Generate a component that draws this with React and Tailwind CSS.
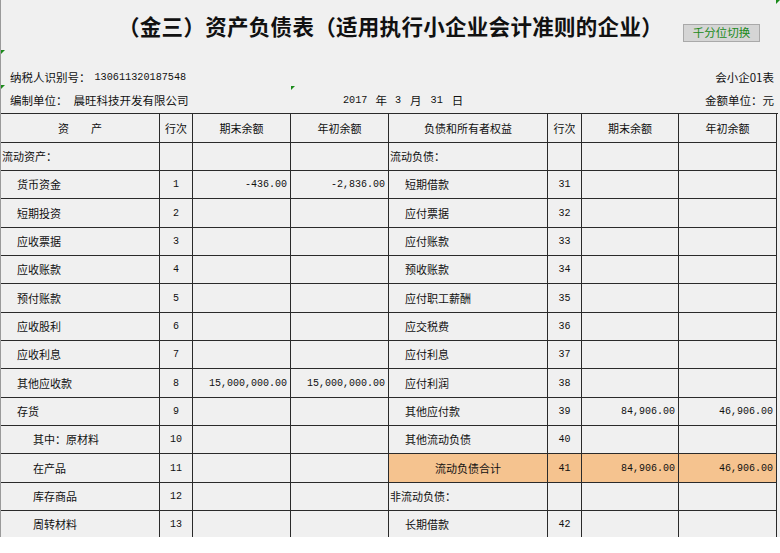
import React from "react";

const cjk = "font-['Noto_Sans_CJK_SC','Noto_Sans',sans-serif]";
const mono = "font-['Liberation_Mono',monospace]";

const heights = ["h-[28px]", "h-[28px]", "h-[29px]"];

const rows = [
    { l: { name: "流动资产：", indent: 0 }, r: { name: "流动负债：", indent: 0 } },
    { l: { name: "货币资金", no: "1", end: "-436.00", begin: "-2,836.00" }, r: { name: "短期借款", no: "31" } },
    { l: { name: "短期投资", no: "2" }, r: { name: "应付票据", no: "32" } },
    { l: { name: "应收票据", no: "3" }, r: { name: "应付账款", no: "33" } },
    { l: { name: "应收账款", no: "4" }, r: { name: "预收账款", no: "34" } },
    { l: { name: "预付账款", no: "5" }, r: { name: "应付职工薪酬", no: "35" } },
    { l: { name: "应收股利", no: "6" }, r: { name: "应交税费", no: "36" } },
    { l: { name: "应收利息", no: "7" }, r: { name: "应付利息", no: "37" } },
    { l: { name: "其他应收款", no: "8", end: "15,000,000.00", begin: "15,000,000.00" }, r: { name: "应付利润", no: "38" } },
    { l: { name: "存货", no: "9" }, r: { name: "其他应付款", no: "39", end: "84,906.00", begin: "46,906.00" } },
    { l: { name: "其中：原材料", no: "10", indent: 2 }, r: { name: "其他流动负债", no: "40" } },
    { l: { name: "在产品", no: "11", indent: 2 }, r: { name: "流动负债合计", no: "41", end: "84,906.00", begin: "46,906.00", total: true } },
    { l: { name: "库存商品", no: "12", indent: 2 }, r: { name: "非流动负债：", indent: 0 } },
    { l: { name: "周转材料", no: "13", indent: 2 }, r: { name: "长期借款", no: "42" } },
];

const cellBase = "border-r border-b border-[#2a2a2a] flex items-center overflow-hidden";

const Side = ({ item, h }) => {
    const bg = item.total ? "bg-[#f5c38f]" : "";
    const pad = item.indent === 0 ? "pl-[1px]" : item.indent === 2 ? "pl-[32px]" : "pl-[16px]";
    return (
        <>
            <div className={`${cellBase} ${h} ${bg} ${item.total ? "justify-center" : pad} ${cjk} text-[11px]`}>
                {item.name}
            </div>
            <div className={`${cellBase} ${h} ${bg} justify-center ${mono} text-[10px]`}>{item.no}</div>
            <div className={`${cellBase} ${h} ${bg} justify-end pr-[3px] ${mono} text-[10px]`}>{item.end}</div>
            <div className={`${cellBase} ${h} ${bg} justify-end pr-[3px] ${mono} text-[10px]`}>{item.begin}</div>
        </>
    );
};

const Mark = ({ className }) => (
    <span className={`absolute w-0 h-0 border-t-[4px] border-r-[4px] border-t-[#1a8a1a] border-r-transparent ${className}`} />
);

export default function App() {
    const headCell = `${cellBase} h-[29px] justify-center ${cjk} text-[11px]`;
    const num = `${mono} text-[10.2px]`;
    return (
        <div className="w-[780px] h-[553px] bg-white">
            <div className="relative h-[537px] overflow-hidden bg-[#f0f0f0] border-l border-[#9a9a9a] text-[#111]">
                <Mark className="left-0 top-[50px]" />
                <Mark className="left-0 top-[85px]" />
                <Mark className="left-[290px] top-[86px]" />
                <Mark className="left-[775px] top-0" />

                <div className="grid grid-cols-[1fr_auto_1fr] h-[67px]">
                    <div />
                    <h1 className={`pt-[11px] text-[21.5px] leading-[30px] tracking-[0.3px] font-bold ${cjk}`}>
                        （金三）资产负债表（适用执行小企业会计准则的企业）
                    </h1>
                    <div>
                        <button
                            type="button"
                            className={`mt-[24px] ml-[20px] w-[77px] h-[18px] bg-[#d5d5d5] border border-[#a9a9a9] text-[#208a20] text-[11.5px] leading-none ${cjk}`}
                        >
                            千分位切换
                        </button>
                    </div>
                </div>

                <div className={`flex items-center h-[22px] pl-[9px] pr-[6px] text-[11.5px] ${cjk}`}>
                    <span>纳税人识别号：</span>
                    <span className={`${num} ml-[4px]`}>130611320187548</span>
                    <span className="ml-auto">会小企01表</span>
                </div>
                <div className={`flex items-center h-[24px] pl-[9px] pr-[6px] text-[11.5px] ${cjk}`}>
                    <span className="w-[333px] shrink-0">
                        编制单位：<span className="ml-[6px]">晨旺科技开发有限公司</span>
                    </span>
                    <span className="flex items-center">
                        <span className={num}>2017</span>
                        <span className="mx-[8px]">年</span>
                        <span className={num}>3</span>
                        <span className="mx-[9px]">月</span>
                        <span className={num}>31</span>
                        <span className="ml-[9px]">日</span>
                    </span>
                    <span className="ml-auto">金额单位：元</span>
                </div>

                <div className="grid grid-cols-[159px_33px_98px_98px_159px_34px_97px_98px] border-t border-l border-[#2a2a2a] w-[778px] -ml-px">
                    <div className={headCell}>资　　产</div>
                    <div className={headCell}>行次</div>
                    <div className={headCell}>期末余额</div>
                    <div className={headCell}>年初余额</div>
                    <div className={headCell}>负债和所有者权益</div>
                    <div className={headCell}>行次</div>
                    <div className={headCell}>期末余额</div>
                    <div className={headCell}>年初余额</div>
                    {rows.map((row, i) => (
                        <React.Fragment key={i}>
                            <Side item={row.l} h={heights[i % 3]} />
                            <Side item={row.r} h={heights[i % 3]} />
                        </React.Fragment>
                    ))}
                </div>
            </div>
        </div>
    );
}
